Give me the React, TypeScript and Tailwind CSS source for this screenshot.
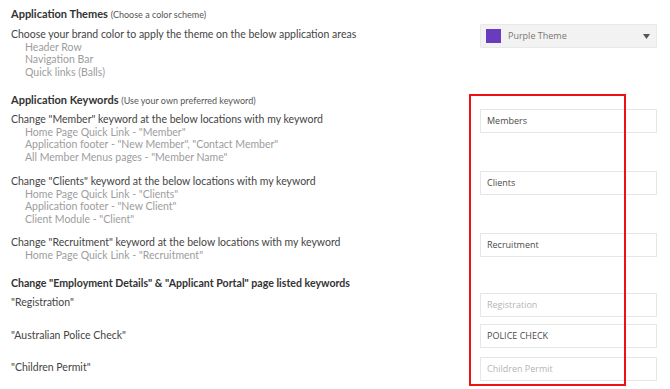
import React from "react";

const Field = ({ value, placeholder }: { value?: string; placeholder?: string }) => (
  <div className="w-[177px] h-[24px] border border-[#e6e6e6] bg-white flex items-center pl-[6px] text-[9px] font-['Open_Sans',sans-serif]">
    {value ? (
      <span className="text-[#4a4a4a]">{value}</span>
    ) : (
      <span className="text-[#b5b5b5]">{placeholder}</span>
    )}
  </div>
);

const Sub = ({ children }: { children: React.ReactNode }) => (
  <div className="pl-[14px] text-[#9d9d9d] h-[12.5px] leading-[12.5px]">{children}</div>
);

const Main = ({ children }: { children: React.ReactNode }) => (
  <div className="text-[#444] h-[12.5px] leading-[12.5px]">{children}</div>
);

export default function App() {
  return (
    <div className="relative w-[670px] h-[389px] bg-white overflow-hidden font-['Lato',sans-serif] text-[10.5px]">
      <div className="pl-[11px] pr-[13px] pt-[7px]">
        <div className="h-[14px] leading-[14px] text-[#333] text-[11px]">
          <span className="font-bold">Application Themes</span>{" "}
          <span className="text-[9px] text-[#555]">(Choose a color scheme)</span>
        </div>

        <div className="mt-[3px] flex items-start">
          <div className="flex-1 pt-[4px]">
            <Main>Choose your brand color to apply the theme on the below application areas</Main>
            <Sub>Header Row</Sub>
            <Sub>Navigation Bar</Sub>
            <Sub>Quick links (Balls)</Sub>
          </div>
          <div className="w-[177px] h-[24px] bg-[#f2f2f2] border border-[#e9e9e9] rounded-[1px] flex items-center pl-[5px] pr-[5px] font-['Open_Sans',sans-serif] text-[9px]">
            <div className="w-[15px] h-[14px] bg-[#6a3bbf]" />
            <span className="ml-[7px] text-[#777] flex-1">Purple Theme</span>
            <svg width="7" height="5" viewBox="0 0 7 5" className="mr-[1px]">
              <path d="M0 0 H7 L3.5 5 Z" fill="#555" />
            </svg>
          </div>
        </div>

        <div className="mt-[15px] h-[14px] leading-[14px] text-[#333] text-[11px]">
          <span className="font-bold">Application Keywords</span>{" "}
          <span className="text-[9px] text-[#555]">(Use your own preferred keyword)</span>
        </div>

        <div className="mt-[2px] flex items-start">
          <div className="flex-1 pt-[4px]">
            <Main>Change "Member" keyword at the below locations with my keyword</Main>
            <Sub>Home Page Quick Link - "Member"</Sub>
            <Sub>Application footer - "New Member", "Contact Member"</Sub>
            <Sub>All Member Menus pages - "Member Name"</Sub>
          </div>
          <Field value="Members" />
        </div>

        <div className="mt-[8px] flex items-start">
          <div className="flex-1 pt-[4px]">
            <Main>Change "Clients" keyword at the below locations with my keyword</Main>
            <Sub>Home Page Quick Link - "Clients"</Sub>
            <Sub>Application footer - "New Client"</Sub>
            <Sub>Client Module - "Client"</Sub>
          </div>
          <Field value="Clients" />
        </div>

        <div className="mt-[8px] flex items-start">
          <div className="flex-1 pt-[3px]">
            <Main>Change "Recruitment" keyword at the below locations with my keyword</Main>
            <Sub>Home Page Quick Link - "Recruitment"</Sub>
          </div>
          <Field value="Recruitment" />
        </div>

        <div className="mt-[15px] h-[14px] leading-[14px] text-[#333] font-bold text-[10.6px]">
          Change "Employment Details" &amp; "Applicant Portal" page listed keywords
        </div>

        <div className="mt-[3px] flex items-start">
          <div className="flex-1 pt-[3px]">
            <Main>"Registration"</Main>
          </div>
          <Field placeholder="Registration" />
        </div>

        <div className="mt-[7px] flex items-start">
          <div className="flex-1 pt-[5px]">
            <Main>"Australian Police Check"</Main>
          </div>
          <div className="h-[25px]">
            <Field value="POLICE CHECK" />
          </div>
        </div>

        <div className="mt-[8px] flex items-start">
          <div className="flex-1 pt-[4px]">
            <Main>"Children Permit"</Main>
          </div>
          <Field placeholder="Children Permit" />
        </div>
      </div>

      <div className="absolute left-[469px] top-[94px] w-[157px] h-[292px] border-2 border-[#ee1111] pointer-events-none" />
    </div>
  );
}
